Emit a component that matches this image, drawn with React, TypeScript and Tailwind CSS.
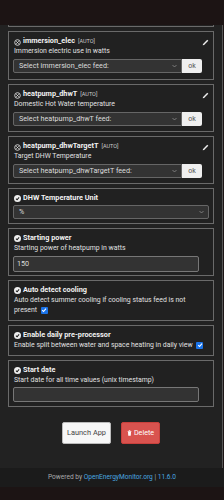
import React from "react";

const font = { fontFamily: "Roboto, 'Noto Sans', Arial, sans-serif" };

function XIcon() {
  return (
    <svg width="7" height="7" viewBox="0 0 10 10" className="shrink-0 mt-[3px]">
      <circle cx="5" cy="5" r="4" fill="none" stroke="#ddd" strokeWidth="1.3" />
      <path d="M3.3 3.3 L6.7 6.7 M6.7 3.3 L3.3 6.7" stroke="#ddd" strokeWidth="1.3" />
    </svg>
  );
}

function CheckIcon() {
  return (
    <svg width="7" height="7" viewBox="0 0 10 10" className="shrink-0 mt-[2px]">
      <circle cx="5" cy="5" r="5" fill="#eee" />
      <path d="M2.8 5.2 L4.4 6.8 L7.3 3.5" fill="none" stroke="#222" strokeWidth="1.5" />
    </svg>
  );
}

function Pencil() {
  return (
    <svg width="7" height="7" viewBox="0 0 10 10" className="absolute right-[4px] top-[7px]">
      <path d="M1 9 L1.5 7 L7.5 1 L9 2.5 L3 8.5 Z" fill="#eee" />
    </svg>
  );
}

function Chevron() {
  return (
    <svg width="5" height="4" viewBox="0 0 10 6">
      <path d="M1 1 L5 5 L9 1" fill="none" stroke="#999" strokeWidth="1.4" />
    </svg>
  );
}

function Checkbox() {
  return (
    <span className="inline-flex items-center justify-center w-[7px] h-[7px] bg-[#1a73e8] rounded-[1px] align-middle ml-[2px]">
      <svg width="6" height="6" viewBox="0 0 10 10">
        <path d="M2 5.3 L4.2 7.5 L8.3 2.6" fill="none" stroke="#fff" strokeWidth="1.8" />
      </svg>
    </span>
  );
}

function Panel({ children, edit, h }: { children: React.ReactNode; edit?: boolean; h: string }) {
  return (
    <div className={`relative border border-[#6a6a6a] bg-[#212121] px-[4px] pt-[4px] ${h}`}>
      {edit && <Pencil />}
      {children}
    </div>
  );
}

function Title({ name, auto, feed }: { name: string; auto?: boolean; feed?: boolean }) {
  return (
    <div className="flex items-start gap-[2px] h-[10px] leading-[10px] pl-[1px]">
      {feed ? <XIcon /> : <CheckIcon />}
      <span className="text-[7.3px] font-bold text-[#f2f2f2]">{name}</span>
      {auto && <span className="text-[5.5px] text-[#ccc] ml-[1px]">[AUTO]</span>}
    </div>
  );
}

function Desc({ children }: { children: React.ReactNode }) {
  return <div className="text-[6.9px] leading-[10px] text-[#e0e0e0] pl-[1px]">{children}</div>;
}

function FeedSelect({ name }: { name: string }) {
  return (
    <div className="flex mt-[3px] h-[14px] w-[189px]">
      <div className="flex-1 flex items-center justify-between bg-[#333] border border-[#666] rounded-l-[2px] pl-[5px] pr-[4px]">
        <span className="text-[7.2px] text-[#ddd]">Select {name} feed:</span>
        <Chevron />
      </div>
      <div className="w-[20px] flex items-center justify-center bg-[#efefef] rounded-r-[2px] text-[7px] text-[#555]">ok</div>
    </div>
  );
}

export default function App() {
  return (
    <div style={font} className="w-[224px] h-[500px] flex flex-col bg-[#1c1414] overflow-hidden">
      <div className="h-[25px] shrink-0 bg-[#1c1414]" />
      <div className="flex-1 bg-[#222] border-r border-[#555] mr-[1px] px-[8px] flex flex-col">
        <div className="h-[2px] border-x border-b border-[#6a6a6a]" />
        <div className="flex flex-col gap-[4px] mt-[4px]">
          <Panel edit h="h-[49px]">
            <Title name="immersion_elec" auto feed />
            <Desc>Immersion electric use in watts</Desc>
            <FeedSelect name="immersion_elec" />
          </Panel>
          <Panel edit h="h-[48px]">
            <Title name="heatpump_dhwT" auto feed />
            <Desc>Domestic Hot Water temperature</Desc>
            <FeedSelect name="heatpump_dhwT" />
          </Panel>
          <Panel edit h="h-[48px]">
            <Title name="heatpump_dhwTargetT" auto feed />
            <Desc>Target DHW Temperature</Desc>
            <FeedSelect name="heatpump_dhwTargetT" />
          </Panel>
          <Panel h="h-[36px]">
            <Title name="DHW Temperature Unit" />
            <div className="mt-[2px] h-[14px] flex items-center justify-between bg-[#333] border border-[#666] rounded-[2px] pl-[5px] pr-[4px]">
              <span className="text-[7.2px] text-[#ddd]">%</span>
              <Chevron />
            </div>
          </Panel>
          <Panel h="h-[48px]">
            <Title name="Starting power" />
            <Desc>Starting power of heatpump in watts</Desc>
            <div className="mt-[3px] h-[16px] w-[186px] flex items-center bg-[#333] border border-[#777] rounded-[2px] pl-[3px]">
              <span className="text-[7.2px] text-[#ddd]">150</span>
            </div>
          </Panel>
          <Panel h="h-[41px]">
            <Title name="Auto detect cooling" />
            <Desc>
              Auto detect summer cooling if cooling status feed is not present <Checkbox />
            </Desc>
          </Panel>
          <Panel h="h-[31px]">
            <Title name="Enable daily pre-processor" />
            <Desc>
              Enable split between water and space heating in daily view <Checkbox />
            </Desc>
          </Panel>
          <Panel h="h-[47px]">
            <Title name="Start date" />
            <Desc>Start date for all time values (unix timestamp)</Desc>
            <div className="mt-[2px] h-[15px] w-[186px] bg-[#333] border border-[#777] rounded-[2px]" />
          </Panel>
        </div>
        <div className="flex justify-center gap-[10px] mt-[15px]">
          <div className="w-[49px] h-[22px] flex items-center justify-center bg-[#f7f7f7] border border-[#bbb] rounded-[2px] text-[7.4px] text-[#444]">
            Launch App
          </div>
          <div className="w-[39px] h-[22px] flex items-center justify-center gap-[2px] bg-[#d9534f] border border-[#c9403c] rounded-[2px] text-[7.2px] text-white">
            <svg width="5" height="6" viewBox="0 0 10 12">
              <path d="M1 2 H9 V3 H1 Z M3.5 0.5 H6.5 V2 H3.5 Z M2 3.5 H8 L7.5 11.5 H2.5 Z" fill="#fff" />
            </svg>
            Delete
          </div>
        </div>
      </div>
      <div className="h-[19px] shrink-0 bg-[#1b1b1b] flex items-center justify-center text-[6.6px] text-[#aaa]">
        <span>
          Powered by <span className="text-[#4aa8e0]">OpenEnergyMonitor.org</span> | <span className="text-[#4aa8e0]">11.6.0</span>
        </span>
      </div>
      <div className="h-[13px] shrink-0 bg-[#1c1414]" />
    </div>
  );
}
